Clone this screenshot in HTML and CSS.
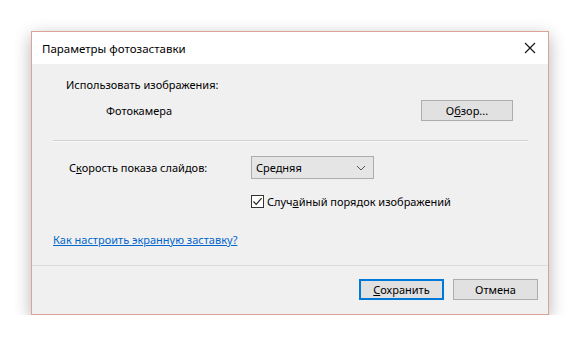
FILE: index.html
```html
<!DOCTYPE html>
<html lang="ru">
<head>
    <meta charset="UTF-8">
    <title>Параметры фотозаставки</title>
    <link rel="stylesheet" href="styles.css">
</head>
<body>
    <div class="dialog">
        <div class="title-bar">
            <span class="title">Параметры фотозаставки</span>
            <svg class="close" width="12" height="12" viewBox="0 0 12 12">
                <path d="M1 1 L11 11 M11 1 L1 11" stroke="#111" stroke-width="1.1" fill="none"/>
            </svg>
        </div>

        <div class="body">
            <div class="use-label">Использовать изображения:</div>
            <div class="camera-row">
                <span class="camera">Фотокамера</span>
                <button class="btn browse">О<u>б</u>зор...</button>
            </div>

            <div class="sep"></div>

            <div class="speed-row">
                <span class="speed-label">С<u>к</u>орость показа слайдов:</span>
                <div class="combo">
                    <span>Средняя</span>
                    <svg width="10" height="6" viewBox="0 0 10 6">
                        <path d="M1 1 L5 5 L9 1" stroke="#555" stroke-width="1" fill="none"/>
                    </svg>
                </div>
            </div>

            <div class="check-row">
                <span class="checkbox">
                    <svg width="11" height="11" viewBox="0 0 11 11">
                        <path d="M1.5 5.5 L4.2 8.3 L9.6 2.2" stroke="#222" stroke-width="1.2" fill="none"/>
                    </svg>
                </span>
                <span>Случ<u>а</u>йный порядок изображений</span>
            </div>

            <a class="help" href="#">Как настроить экранную заставку?</a>
        </div>

        <div class="footer">
            <button class="btn primary"><u>С</u>охранить</button>
            <button class="btn">Отмена</button>
        </div>
    </div>
</body>
</html>
```

FILE: styles.css
```css
body {
    margin: 0;
    background-color: #fff;
    font-family: 'Noto Sans', 'Open Sans', sans-serif;
    font-size: 11px;
    color: #000;
}

.dialog {
    margin: 31px 0 0 31px;
    width: 516px;
    border: 1px solid #d9a594;
    background-color: #f0f0f0;
    box-shadow: 0 5px 16px rgba(0, 0, 0, 0.3);
}

.title-bar {
    height: 32px;
    background-color: #fff;
    display: flex;
    align-items: center;
    padding: 0 12px 0 10px;
    font-size: 11.5px;
}

.title {
    flex: 1;
}

.close {
    display: block;
}

.body {
    height: 202px;
    padding-top: 13px;
    box-sizing: border-box;
    border-bottom: 1px solid #dcdcdc;
}

.use-label {
    line-height: 16px;
    padding-left: 34px;
}

.camera-row {
    display: flex;
    align-items: center;
    margin-top: 7px;
    padding: 0 35px 0 74px;
}

.camera {
    flex: 1;
}

.btn {
    font-family: inherit;
    font-size: 11px;
    color: #000;
    background-color: #e1e1e1;
    border: 1px solid #adadad;
    height: 21px;
    padding: 0;
    box-sizing: border-box;
}

.browse {
    width: 92px;
}

.sep {
    margin: 19px 20px 0 21px;
    border-top: 1px solid #d2d2d2;
    border-bottom: 1px solid #fafafa;
}

.speed-row {
    display: flex;
    align-items: center;
    margin-top: 14px;
    padding-left: 37px;
}

.speed-label {
    width: 182px;
}

.combo {
    width: 123px;
    height: 23px;
    box-sizing: border-box;
    border: 1px solid #adadad;
    background-color: #e5e5e5;
    display: flex;
    align-items: center;
    justify-content: space-between;
    padding: 0 7px 0 4px;
}

.check-row {
    display: flex;
    align-items: center;
    margin-top: 15px;
    padding-left: 219px;
    line-height: 15px;
}

.checkbox {
    width: 13px;
    height: 13px;
    box-sizing: border-box;
    border: 1px solid #333;
    background-color: #fff;
    display: flex;
    align-items: center;
    justify-content: center;
    margin-right: 3px;
}

.help {
    display: inline-block;
    margin: 23px 0 0 21px;
    color: #0066cc;
    line-height: 16px;
}

.footer {
    height: 48px;
    display: flex;
    justify-content: flex-end;
    align-items: flex-start;
    gap: 9px;
    padding: 13px 10px 0 0;
    box-sizing: border-box;
}

.footer .btn {
    width: 85px;
}

.primary {
    border: 2px solid #0078d7;
}
```
